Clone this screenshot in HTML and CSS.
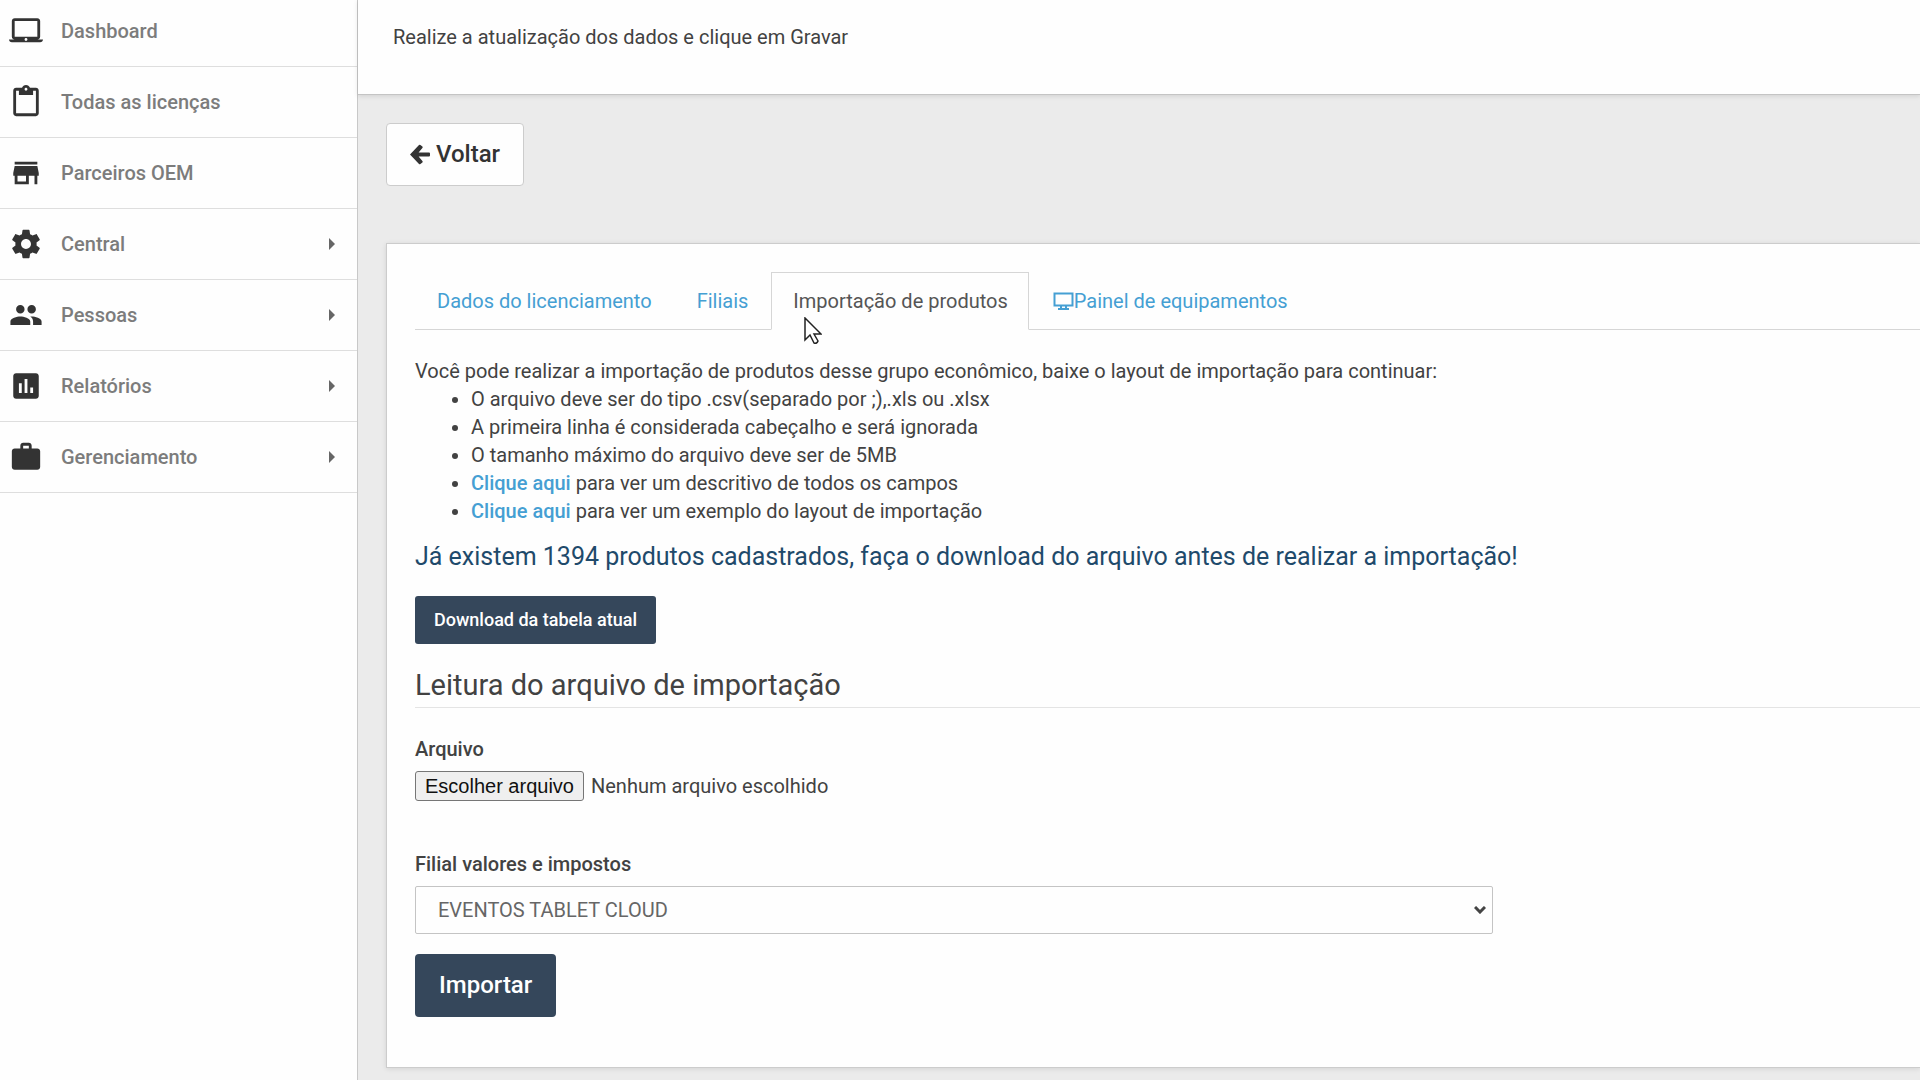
FILE: index.html
```html
<!DOCTYPE html>
<html lang="pt-BR">
<head>
  <meta charset="UTF-8">
  <meta name="viewport" content="width=device-width, initial-scale=1.0">
  <title>Importação de produtos</title>
  <link rel="stylesheet" href="styles.css">
</head>
<body>
  <aside class="sidebar">
    <nav>
      <ul class="menu">
        <li><a href="#">
          <svg class="menu-icon" viewBox="0 0 24 24"><path d="M20 18c1.1 0 1.99-.9 1.99-2L22 5c0-1.1-.9-2-2-2H4c-1.1 0-2 .9-2 2v11c0 1.1.9 2 2 2H0c0 1.1.9 2 2 2h20c1.1 0 2-.9 2-2h-4zM4 5h16v11H4V5zm8 14c-.55 0-1-.45-1-1s.45-1 1-1 1 .45 1 1-.45 1-1 1z"/></svg>
          <span>Dashboard</span>
        </a></li>
        <li><a href="#">
          <svg class="menu-icon" viewBox="0 0 24 24"><path d="M19 2h-4.18C14.4.84 13.3 0 12 0c-1.3 0-2.4.84-2.82 2H5c-1.1 0-2 .9-2 2v16c0 1.1.9 2 2 2h14c1.1 0 2-.9 2-2V4c0-1.1-.9-2-2-2zm-7 0c.55 0 1 .45 1 1s-.45 1-1 1-1-.45-1-1 .45-1 1-1zm7 18H5V4h2v3h10V4h2v16z"/></svg>
          <span>Todas as licenças</span>
        </a></li>
        <li><a href="#">
          <svg class="menu-icon" viewBox="0 0 24 24"><path d="M20 4H4v2h16V4zm1 10v-2l-1-5H4l-1 5v2h1v6h10v-6h4v6h2v-6h1zm-9 4H6v-4h6v4z"/></svg>
          <span>Parceiros OEM</span>
        </a></li>
        <li><a href="#" class="has-sub">
          <svg class="menu-icon" viewBox="0 0 24 24"><path d="M19.43 12.98c.04-.32.07-.64.07-.98s-.03-.66-.07-.98l2.11-1.65c.19-.15.24-.42.12-.64l-2-3.46c-.12-.22-.39-.3-.61-.22l-2.49 1c-.52-.4-1.08-.73-1.69-.98l-.38-2.65C14.46 2.18 14.25 2 14 2h-4c-.25 0-.46.18-.49.42l-.38 2.65c-.61.25-1.17.59-1.69.98l-2.49-1c-.23-.09-.49 0-.61.22l-2 3.46c-.13.22-.07.49.12.64l2.11 1.65c-.04.32-.07.65-.07.98s.03.66.07.98l-2.11 1.65c-.19.15-.24.42-.12.64l2 3.46c.12.22.39.3.61.22l2.49-1c.52.4 1.08.73 1.69.98l.38 2.65c.03.24.24.42.49.42h4c.25 0 .46-.18.49-.42l.38-2.65c.61-.25 1.17-.59 1.69-.98l2.49 1c.23.09.49 0 .61-.22l2-3.46c.12-.22.07-.49-.12-.64l-2.11-1.65zM12 15.5c-1.93 0-3.5-1.57-3.5-3.5s1.57-3.5 3.5-3.5 3.5 1.57 3.5 3.5-1.57 3.5-3.5 3.5z"/></svg>
          <span>Central</span>
        </a></li>
        <li><a href="#" class="has-sub">
          <svg class="menu-icon" viewBox="0 0 24 24"><path d="M16 11c1.66 0 2.99-1.34 2.99-3S17.66 5 16 5c-1.66 0-3 1.34-3 3s1.34 3 3 3zm-8 0c1.66 0 2.99-1.34 2.99-3S9.66 5 8 5C6.34 5 5 6.34 5 8s1.34 3 3 3zm0 2c-2.33 0-7 1.17-7 3.5V19h14v-2.5c0-2.33-4.67-3.5-7-3.5zm8 0c-.29 0-.62.02-.97.05 1.16.84 1.97 1.97 1.97 3.45V19h6v-2.5c0-2.33-4.67-3.5-7-3.5z"/></svg>
          <span>Pessoas</span>
        </a></li>
        <li><a href="#" class="has-sub">
          <svg class="menu-icon" viewBox="0 0 24 24"><path d="M19 3H5c-1.1 0-2 .9-2 2v14c0 1.1.9 2 2 2h14c1.1 0 2-.9 2-2V5c0-1.1-.9-2-2-2zM9 17H7v-7h2v7zm4 0h-2V7h2v10zm4 0h-2v-4h2v4z"/></svg>
          <span>Relatórios</span>
        </a></li>
        <li><a href="#" class="has-sub">
          <svg class="menu-icon" viewBox="0 0 24 24"><path d="M20 6h-4V4c0-1.11-.89-2-2-2h-4c-1.11 0-2 .89-2 2v2H4c-1.11 0-1.99.89-1.99 2L2 19c0 1.11.89 2 2 2h16c1.11 0 2-.89 2-2V8c0-1.11-.89-2-2-2zm-6 0h-4V4h4v2z"/></svg>
          <span>Gerenciamento</span>
        </a></li>
      </ul>
    </nav>
  </aside>

  <main class="main">
    <header class="page-head">
      <p>Realize a atualização dos dados e clique em Gravar</p>
    </header>

    <div class="content">
      <button type="button" class="btn btn-default btn-lg">
        <svg class="arrow" viewBox="0 0 20 21"><path d="M0 10.5 9 1a1 1 0 0 1 1.4 0l2 1.6a1 1 0 0 1 0 1.4L8.6 8.4H19a1 1 0 0 1 1 1v2.2a1 1 0 0 1-1 1H8.6l3.8 4.4a1 1 0 0 1 0 1.4l-2 1.6a1 1 0 0 1-1.4 0z"/></svg>
        Voltar
      </button>

      <section class="card">
        <ul class="tabs">
          <li><a href="#">Dados do licenciamento</a></li>
          <li><a href="#">Filiais</a></li>
          <li class="active">
            <a href="#">Importação de produtos</a>
            <svg class="cursor" viewBox="0 0 18 28"><path d="M1 1v22l5-5 4 8q3 1 4-2l-4-7h7z"/></svg>
          </li>
          <li><a href="#"><svg class="monitor" viewBox="0 0 21 18"><path d="M1.5 1.5h18v12h-18zM5 17h11M8 13v4M13 13v4"/></svg>Painel de equipamentos</a></li>
        </ul>

        <p class="intro">Você pode realizar a importação de produtos desse grupo econômico, baixe o layout de importação para continuar:</p>
        <ul class="rules">
          <li>O arquivo deve ser do tipo .csv(separado por ;),.xls ou .xlsx</li>
          <li>A primeira linha é considerada cabeçalho e será ignorada</li>
          <li>O tamanho máximo do arquivo deve ser de 5MB</li>
          <li><a href="#">Clique aqui</a> para ver um descritivo de todos os campos</li>
          <li><a href="#">Clique aqui</a> para ver um exemplo do layout de importação</li>
        </ul>

        <h4 class="notice">Já existem 1394 produtos cadastrados, faça o download do arquivo antes de realizar a importação!</h4>
        <button type="button" class="btn btn-primary">Download da tabela atual</button>

        <h3 class="section-title">Leitura do arquivo de importação</h3>

        <form>
          <div class="form-group">
            <label for="arquivo">Arquivo</label>
            <div class="file">
              <span class="file-btn">Escolher arquivo</span>
              <span>Nenhum arquivo escolhido</span>
              <input type="file" id="arquivo" accept=".csv,.xls,.xlsx">
            </div>
          </div>

          <div class="form-group">
            <label for="filial">Filial valores e impostos</label>
            <div class="select">
              <select id="filial">
                <option>EVENTOS TABLET CLOUD</option>
              </select>
              <svg class="chevron" viewBox="0 0 12 8"><path d="M1 1l5 5 5-5"/></svg>
            </div>
          </div>

          <button type="button" class="btn btn-primary btn-lg">Importar</button>
        </form>
      </section>
    </div>
  </main>
</body>
</html>
```
FILE: styles.css
```css
* {
  box-sizing: border-box;
}
body {
  margin: 0;
  display: flex;
  min-height: 100vh;
  overflow: hidden;
  font-family: Roboto, sans-serif;
  font-size: 20px;
  line-height: 28px;
  color: #424242;
  background: #ebebeb;
}
a {
  color: #459fd3;
  text-decoration: none;
}
p, h3, h4 {
  margin: 0;
  font-weight: 400;
}
ul {
  margin: 0;
  padding: 0;
}

/* menu lateral */
.sidebar {
  flex: 0 0 358px;
  background: #fefefe;
  border-right: 1px solid #c8c8c8;
}
.menu {
  list-style: none;
  margin-top: -4px;
}
.menu a {
  display: flex;
  align-items: center;
  gap: 18px;
  height: 71px;
  padding: 0 22px 0 9px;
  border-bottom: 1px solid #dedede;
  color: #7c7c7c;
  font-weight: 500;
}
.menu-icon {
  width: 34px;
  height: 34px;
  fill: #333;
}
.has-sub::after {
  content: "";
  margin-left: auto;
  border: 6px solid transparent;
  border-left-color: #666;
  border-right: 0;
}

/* conteudo */
.main {
  flex: 1;
  min-width: 0;
}
.page-head {
  padding: 23px 35px 43px;
  background: #fefefe;
  border-bottom: 1px solid #c4c4c4;
  box-shadow: 0 1px 5px rgba(0, 0, 0, 0.12);
}
.content {
  padding: 28px 0 12px 28px;
}
.card {
  margin-top: 57px;
  padding: 28px 0 50px 28px;
  background: #fefefe;
  border: 1px solid #ccc;
  border-right: 0;
  box-shadow: 0 1px 5px rgba(0, 0, 0, 0.1);
}

.btn {
  display: block;
  padding: 9px 18px;
  border: 1px solid transparent;
  border-radius: 3px;
  font: 500 18px/28px Roboto, sans-serif;
}
.btn-lg {
  padding: 14px 23px;
  border-radius: 4px;
  font-size: 24px;
  line-height: 33px;
}
.btn-default {
  display: flex;
  align-items: center;
  gap: 6px;
  background: #fefefe;
  border-color: #ccc;
  color: #333;
}
.btn-primary {
  background: #35475b;
  color: #fff;
}
.arrow {
  width: 20px;
  height: 21px;
  fill: #333;
}

/* abas */
.tabs {
  display: flex;
  gap: 2px;
  list-style: none;
  border-bottom: 1px solid #d6d6d6;
}
.tabs li {
  position: relative;
  margin-bottom: -1px;
}
.tabs a {
  display: block;
  padding: 14px 20px 14px 21px;
  border: 1px solid transparent;
}
.tabs .active a {
  background: #fefefe;
  border-color: #d6d6d6;
  border-bottom-color: #fefefe;
  color: #555;
}
.monitor {
  width: 21px;
  height: 18px;
  vertical-align: -2px;
  fill: none;
  stroke: #459fd3;
  stroke-width: 2;
}
.cursor {
  position: absolute;
  left: 33px;
  top: 45px;
  width: 18px;
  height: 28px;
  fill: #fff;
  stroke: #222;
  stroke-width: 1.5;
}

.intro {
  margin-top: 27px;
}
.rules {
  padding-left: 56px;
}
.rules a {
  font-weight: 500;
}
.notice {
  margin: 15px 0 22px;
  font-size: 25px;
  line-height: 34px;
  color: #1f4a6b;
}
.section-title {
  margin: 23px 0 27px;
  padding-bottom: 4px;
  border-bottom: 1px solid #e4e4e4;
  font-size: 29px;
  line-height: 36px;
}

/* formulario */
.form-group label {
  display: block;
  margin-bottom: 8px;
  font-weight: 500;
}
.file {
  position: relative;
  display: flex;
  align-items: center;
  gap: 7px;
  margin-bottom: 49px;
}
.file input {
  position: absolute;
  inset: 0;
  width: 100%;
  opacity: 0;
}
.file-btn {
  padding: 0 9px;
  border: 1px solid #767676;
  border-radius: 3px;
  background: #efefef;
  color: #111;
  font-family: "Liberation Sans", Arial, sans-serif;
}
.select {
  display: grid;
  align-items: center;
  max-width: 1078px;
  margin-bottom: 20px;
}
.select select,
.chevron {
  grid-area: 1 / 1;
}
.select select {
  height: 48px;
  padding: 0 22px;
  appearance: none;
  border: 1px solid #c4c4c4;
  border-radius: 2px;
  background: #fefefe;
  color: #666;
  font: 20px Roboto, sans-serif;
}
.chevron {
  justify-self: end;
  width: 12px;
  height: 8px;
  margin-right: 7px;
  fill: none;
  stroke: #444;
  stroke-width: 3;
  pointer-events: none;
}
```
